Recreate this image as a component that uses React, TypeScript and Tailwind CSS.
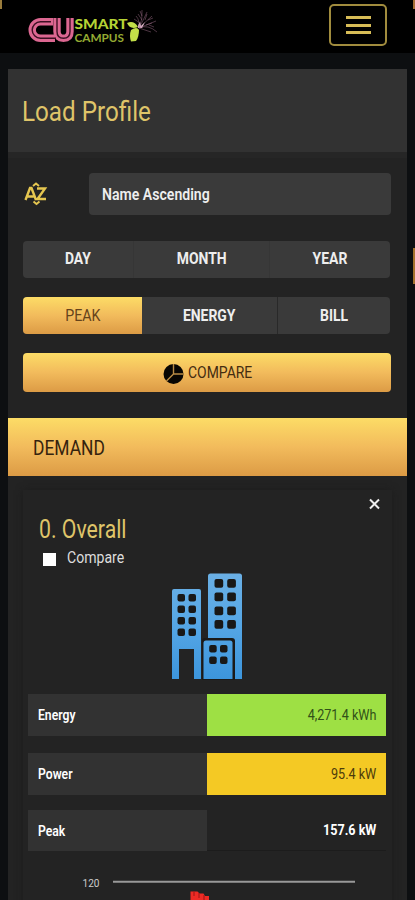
import { ReactNode } from 'react';

const gold = 'bg-gradient-to-b from-[#fcdc66] via-[#f2bb5c] to-[#dc9b45]';

function Logo() {
  return (
    <svg width="134" height="40" viewBox="26 4 134 40" fill="none">
      <path d="M53 21.700H40.500a8.300 8.300 0 0 0 0 16.600H55" stroke="#dc6791" strokeWidth="7.400" />
      <path d="M57 18v13.500q0 6.800 6.500 6.800t6.500-6.800V18" stroke="#dc6791" strokeWidth="7.400" />
      <path
        d="M51 21.700H40.500a8.300 8.300 0 0 0 0 16.600H56M57 18v13.500q0 6.800 6.500 6.800t6.500-6.800V18"
        stroke="#3d1023"
        strokeWidth="1.400"
      />
      <text x="74.500" y="29" fill="#b5d334" fontFamily="Lato, sans-serif" fontWeight="900" fontSize="13.500" textLength="53" lengthAdjust="spacingAndGlyphs">SMART</text>
      <text x="74.500" y="41.700" fill="#94aa32" fontFamily="Lato, sans-serif" fontWeight="700" fontSize="11" textLength="49.500" lengthAdjust="spacingAndGlyphs">CAMPUS</text>
      <path d="M127 23q7-3 11 4-8 3-11-4Z" fill="#c2df48" />
      <path d="M131 30q6-4 8 0 0 7-3 11l-5 .5q-2-6 0-11.500Z" fill="#c2df48" />
      <path d="M138 28q0-4 2-6l1 4 4-4-3 6Z" fill="#e7c7d6" />
      <path
        d="M139 28q1-8-3-12M139 28q4-9 3-18M139 28q5-9 8-16M139 28l13-12M139 28l17-7M139 28q9-4 18 4M139 28l12 4M140 23l-6-4M142 20l-4-6M145 20l2-6M148 20l5-2M149 25l5 2M142 16l-2-5M146 25l6-2"
        stroke="#ac7795"
        strokeWidth=".55"
        opacity=".8"
      />
    </svg>
  );
}

function Building() {
  const win = (x: number, y: number, w: number) => (
    <rect key={`${x}-${y}`} x={x} y={y} width={w} height={w} rx="2" fill="#191817" />
  );
  return (
    <svg width="72" height="108" viewBox="172 572 72 108">
      <defs>
        <linearGradient id="blue" x1="0" y1="572" x2="0" y2="680" gradientUnits="userSpaceOnUse">
          <stop stopColor="#6bb0e5" />
          <stop offset=".5" stopColor="#55a6e5" />
          <stop offset="1" stopColor="#3c95dc" />
        </linearGradient>
      </defs>
      <path d="M172 679v-88q0-2 2-2h25q2 0 2 2v88h-7v-30h-15v30Z" fill="url(#blue)" />
      <path d="M208 679V576q0-2.500 2.500-2.500h29q2.500 0 2.500 2.500v103Z" fill="url(#blue)" />
      <path d="M202 680v-39q0-3 3-3h27q3 0 3 3v39Z" fill="#1b1a19" />
      <path d="M203.500 679v-36q0-2.500 2.500-2.500h24q2.500 0 2.500 2.500v36Z" fill="url(#blue)" />
      {[594, 605.500, 617, 628.500].flatMap((y) => [win(177.500, y, 7.500), win(188.500, y, 7.500)])}
      {[579, 592.500, 606.500, 620].flatMap((y) => [win(214.500, y, 8.700), win(227.200, y, 8.700)])}
      {[645, 656.500].flatMap((y) => [win(209.200, y, 7.500), win(220, y, 7.500)])}
    </svg>
  );
}

function Reading({ label, children, tone }: { label: string; children: ReactNode; tone: string }) {
  return (
    <div className="flex h-[41.500px] text-[14px] font-semibold text-white">
      <div className="flex w-[179px] items-center bg-[#323232] pt-[2px] pl-[10px]">
        <span className="origin-left scale-x-[.87]">{label}</span>
      </div>
      <div className={`flex flex-1 items-center justify-end pt-[2px] pr-[10px] ${tone}`}>
        <span className="origin-right scale-x-[.9]">{children}</span>
      </div>
    </div>
  );
}

export default function App() {
  return (
    <div className="relative h-[900px] w-[415px] overflow-hidden bg-[#0d0f11] font-[Roboto,sans-serif]">
      <header className="flex h-[53px] items-start justify-between bg-black pr-[28px] pl-[26px]">
        <div className="pt-1"><Logo /></div>
        <button className="mt-1 flex h-[42px] w-[58px] flex-col items-center justify-center gap-[4.500px] rounded-[5px] border-2 border-[#a18c3e]">
          <i className="h-[3px] w-[25px] bg-[#d7bd57]" />
          <i className="h-[3px] w-[25px] bg-[#d7bd57]" />
          <i className="h-[3px] w-[25px] bg-[#d7bd57]" />
        </button>
      </header>

      <main className="mt-4 ml-2 h-[831px] w-[399px] bg-[#232323]">
        <div className="flex h-[83px] items-center bg-[#323232] pt-[2px] pl-[14px] text-[28px] text-[#dfc469]">
          <h1 className="origin-left scale-x-[.865]">Load Profile</h1>
        </div>
        <div className="h-[6px] bg-[#262626]" />

        <section className="pt-[15px] pr-4 pl-[15px]">
          <div className="flex h-[42px] items-center">
            <svg width="66" height="42" viewBox="0 0 66 42" className="shrink-0" fill="none" stroke="#e5c650" strokeWidth="2.400">
              <path d="m2.500 27 4.500-12h1.500l4.500 12M4.500 23.500h6.500M14 15.500h8L14.500 26h8.500" />
              <path d="m10 13 3-2.500 3 2.500M10.500 28.500l3 2.500 3-2.500" strokeWidth="2" />
            </svg>
            <div className="flex h-full flex-1 items-center rounded-[4px] bg-[#3a3a3a] pt-[2px] pl-[13px] text-[16px] font-semibold text-[#eee]">
              <span className="origin-left scale-x-[.88]">Name Ascending</span>
            </div>
          </div>

          <div className="mt-[26px] grid h-[36.500px] w-[367px] grid-cols-[111px_136px_1fr] divide-x divide-[#363636] overflow-hidden rounded-[4px] bg-[#3a3a3a] text-[16px] font-bold text-[#eee]">
            {['DAY', 'MONTH', 'YEAR'].map((t) => (
              <div key={t} className="flex items-center justify-center"><span className="scale-x-[.87]">{t}</span></div>
            ))}
          </div>

          <div className="mt-[19.500px] grid h-[37px] w-[367px] grid-cols-[119px_136px_1fr] overflow-hidden rounded-[4px] bg-[#3a3a3a] text-[16px] font-bold text-[#eee]">
            <div className={`flex items-center justify-center font-normal text-[#65431b] ${gold}`}><span className="scale-x-[.89]">PEAK</span></div>
            <div className="flex items-center justify-center border-r border-[#292929]"><span className="scale-x-[.87]">ENERGY</span></div>
            <div className="flex items-center justify-center"><span className="scale-x-[.87]">BILL</span></div>
          </div>

          <div className={`mt-[19px] flex h-[39px] items-center rounded-[4px] pl-[140px] text-[16px] text-[#442c10] ${gold}`}>
            <svg width="22" height="22" viewBox="0 0 22 22" className="mt-[2px]">
              <circle cx="10.500" cy="11" r="10" fill="#080603" />
              <path d="M10.500 1v10h10M10.500 11l-7 7" stroke="#b98c46" strokeWidth="1.400" fill="none" />
            </svg>
            <span className="ml-[3px] origin-left scale-x-[.87]">COMPARE</span>
          </div>
        </section>

        <div className={`mt-[26px] flex h-[58px] items-center pt-[2px] pl-[25px] text-[20px] text-[#35230e] ${gold}`}>
          <span className="origin-left scale-x-[.87]">DEMAND</span>
        </div>

        <section className="mt-[14px] mr-[15px] ml-[15px] h-[420px] bg-[#232323] pt-[7px] shadow-[0_0_7px_#1c1c1c]">
          <div className="flex h-[14px] justify-end pr-[12px]">
            <svg width="11" height="14" viewBox="0 0 11 14" stroke="#eee" strokeWidth="2"><path d="m1 2.500 9 9m0-9-9 9" /></svg>
          </div>
          <h2 className="ml-4 h-[35px] w-fit origin-left scale-x-[.85] text-[25px] leading-[37px] text-[#dfc469]">0. Overall</h2>
          <div className="ml-5 flex h-6 items-center text-[16px] text-[#ddd]">
            <i className="mt-[2px] size-[13px] bg-white" />
            <span className="ml-[11px] origin-left scale-x-[.88]">Compare</span>
          </div>
          <div className="flex h-[124px] justify-center pt-[2px]"><Building /></div>
          <div className="ml-[5px] w-[358px]">
            <Reading label="Energy" tone="bg-[#9ee044] text-[#315018] font-normal">4,271.4 kWh</Reading>
            <div className="h-[17.500px]" />
            <Reading label="Power" tone="bg-[#f4c924] text-[#4c3b0b] font-normal">95.4 kW</Reading>
            <div className="h-[15px]" />
            <Reading label="Peak" tone="border-b border-[#1c1c1c] font-bold">157.6 kW</Reading>
          </div>
          <svg width="367" height="49" viewBox="23 851 367 49" className="block">
            <text x="82.500" y="887" fill="#ccc" fontSize="11.500" textLength="17" lengthAdjust="spacingAndGlyphs">120</text>
            <path d="M113 881.700h242" stroke="#999" strokeWidth="2" />
            <path d="M190.500 900v-8.500h7l2 2h4l1.500 2.500h4v4Z" fill="#ed2b25" />
            <path d="M194 891v5M199 893v5M204 895v5" stroke="#9d1715" strokeWidth="1" />
          </svg>
        </section>
      </main>
      <i className="absolute top-0 left-0 h-[9px] w-[2px] bg-[#9a7c3c]" />
      <i className="absolute top-0 right-0 h-[9px] w-[2px] bg-[#a56e35]" />
      <i className="absolute top-[248px] right-0 h-[36px] w-[2px] bg-[#a3722e]" />
    </div>
  );
}
